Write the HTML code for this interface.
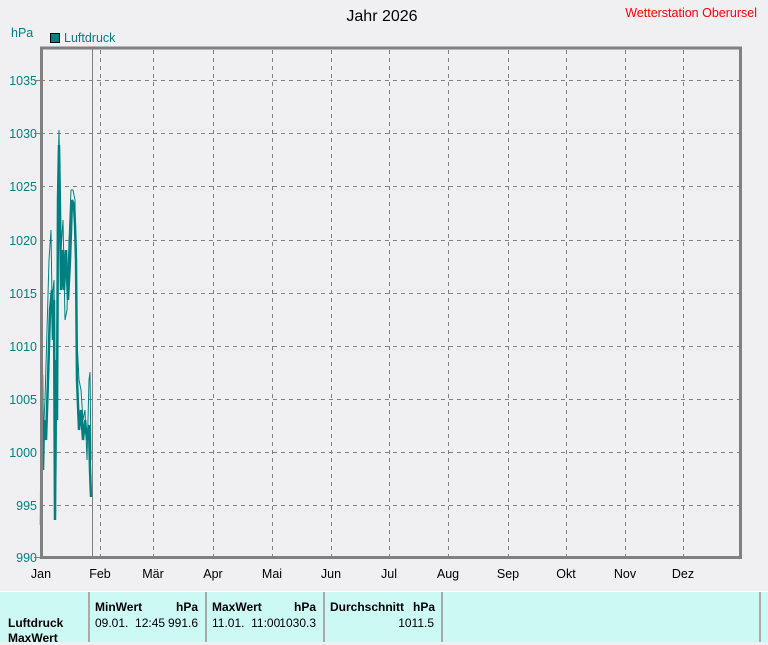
<!DOCTYPE html>
<html><head><meta charset="utf-8"><style>
body{margin:0;width:768px;height:641px;overflow:hidden;background:#f0f0f2;font-family:"Liberation Sans",sans-serif;}
svg{position:absolute;left:0;top:0}
.tb{position:absolute;left:0;top:591px;width:768px;height:50px;background:#cdf9f5;border-top:1px solid #fff}
.tb div{position:absolute;font-size:12px;color:#000;white-space:nowrap}
.tb .r{text-align:right}
.v{position:absolute;top:0;width:2px;height:50px;background:#aaa}
</style></head><body>
<svg width="768" height="591" font-family="Liberation Sans, sans-serif">
<text x="382" y="21" font-size="16" text-anchor="middle" fill="#000">Jahr 2026</text>
<text x="757" y="17" font-size="12.5" text-anchor="end" fill="#ff0000">Wetterstation Oberursel</text>
<text x="11" y="37" font-size="12.5" fill="#008080">hPa</text>
<rect x="50.5" y="33.5" width="9" height="9" fill="#008080" stroke="#000"/>
<text x="64" y="42" font-size="12.5" fill="#008080">Luftdruck</text>
<g stroke="#808080" stroke-dasharray="4,4" stroke-width="1">
<line x1="41" y1="80.5" x2="739" y2="80.5"/><line x1="41" y1="133.5" x2="739" y2="133.5"/>
<line x1="41" y1="186.5" x2="739" y2="186.5"/><line x1="41" y1="240.5" x2="739" y2="240.5"/>
<line x1="41" y1="293.5" x2="739" y2="293.5"/><line x1="41" y1="346.5" x2="739" y2="346.5"/>
<line x1="41" y1="399.5" x2="739" y2="399.5"/><line x1="41" y1="452.5" x2="739" y2="452.5"/>
<line x1="41" y1="505.5" x2="739" y2="505.5"/>
<line x1="100.5" y1="50" x2="100.5" y2="556"/><line x1="153.5" y1="50" x2="153.5" y2="556"/>
<line x1="213.5" y1="50" x2="213.5" y2="556"/><line x1="272.5" y1="50" x2="272.5" y2="556"/>
<line x1="331.5" y1="50" x2="331.5" y2="556"/><line x1="389.5" y1="50" x2="389.5" y2="556"/>
<line x1="448.5" y1="50" x2="448.5" y2="556"/><line x1="508.5" y1="50" x2="508.5" y2="556"/>
<line x1="566.5" y1="50" x2="566.5" y2="556"/><line x1="625.5" y1="50" x2="625.5" y2="556"/>
<line x1="683.5" y1="50" x2="683.5" y2="556"/>
</g>
<line x1="92.5" y1="49" x2="92.5" y2="556" stroke="#808080"/>
<polyline fill="none" stroke="#008080" stroke-width="2.5" points="41,525 42,375 43,470 44,420 46,440 48,380 50,310 52,290 53,340 54,300 55,520 56,360 57,420 58,200 59,145 60,210 61,290 62,280 63,250 64,290 66,250 68,300 70,260 72,200 74,205 75,225 76,260 77,380 79,430 81,410 83,440 85,420 87,440 89,425 90,470 91,497"/>
<polyline fill="none" stroke="#008080" stroke-width="1" points="41,450 42,280 43,440 45,400 47,330 49,260 51,230 52,300 54,280 56,480 57,320 58,170 59,130 60,190 61,250 63,220 65,320 67,310 69,240 71,190 73,190 75,200 77,340 79,380 81,390 83,420 85,410 87,460 89,380 90,372 91,460"/>
<path d="M41.5,48 V557.5 H740.5 V48 Z" fill="none" stroke="#808080" stroke-width="3"/>
<g font-size="12.5" fill="#008080" text-anchor="end">
<text x="37" y="85">1035</text><text x="37" y="138">1030</text><text x="37" y="191">1025</text>
<text x="37" y="245">1020</text><text x="37" y="298">1015</text><text x="37" y="351">1010</text>
<text x="37" y="404">1005</text><text x="37" y="457">1000</text><text x="37" y="510">995</text>
<text x="37" y="562">990</text></g>
<g stroke="#808080"><line x1="34" y1="80.5" x2="40" y2="80.5"/><line x1="34" y1="133.5" x2="40" y2="133.5"/><line x1="34" y1="557.5" x2="40" y2="557.5"/></g>
<g font-size="12.5" fill="#000" text-anchor="middle">
<text x="41" y="578">Jan</text><text x="100" y="578">Feb</text><text x="153" y="578">Mär</text>
<text x="213" y="578">Apr</text><text x="272" y="578">Mai</text><text x="331" y="578">Jun</text>
<text x="389" y="578">Jul</text><text x="448" y="578">Aug</text><text x="508" y="578">Sep</text>
<text x="566" y="578">Okt</text><text x="625" y="578">Nov</text><text x="683" y="578">Dez</text></g>
</svg>
<div class="tb">
<div class="v" style="left:88px"></div><div class="v" style="left:205px"></div><div class="v" style="left:323px"></div><div class="v" style="left:441px"></div><div class="v" style="left:759px"></div>
<div style="left:8px;top:24px;font-weight:bold">Luftdruck</div>
<div style="left:8px;top:39px;font-weight:bold">MaxWert</div>
<div style="left:95px;top:8px;font-weight:bold">MinWert</div><div style="left:176px;top:8px;font-weight:bold">hPa</div>
<div style="left:95px;top:24px">09.01.&nbsp; 12:45</div><div class="r" style="left:150px;width:48px;top:24px">991.6</div>
<div style="left:212px;top:8px;font-weight:bold">MaxWert</div><div style="left:294px;top:8px;font-weight:bold">hPa</div>
<div style="left:212px;top:24px">11.01.&nbsp; 11:00</div><div class="r" style="left:266px;width:50px;top:24px">1030.3</div>
<div style="left:330px;top:8px;font-weight:bold">Durchschnitt</div><div style="left:413px;top:8px;font-weight:bold">hPa</div>
<div class="r" style="left:380px;width:54px;top:24px">1011.5</div>
</div>
</body></html>
